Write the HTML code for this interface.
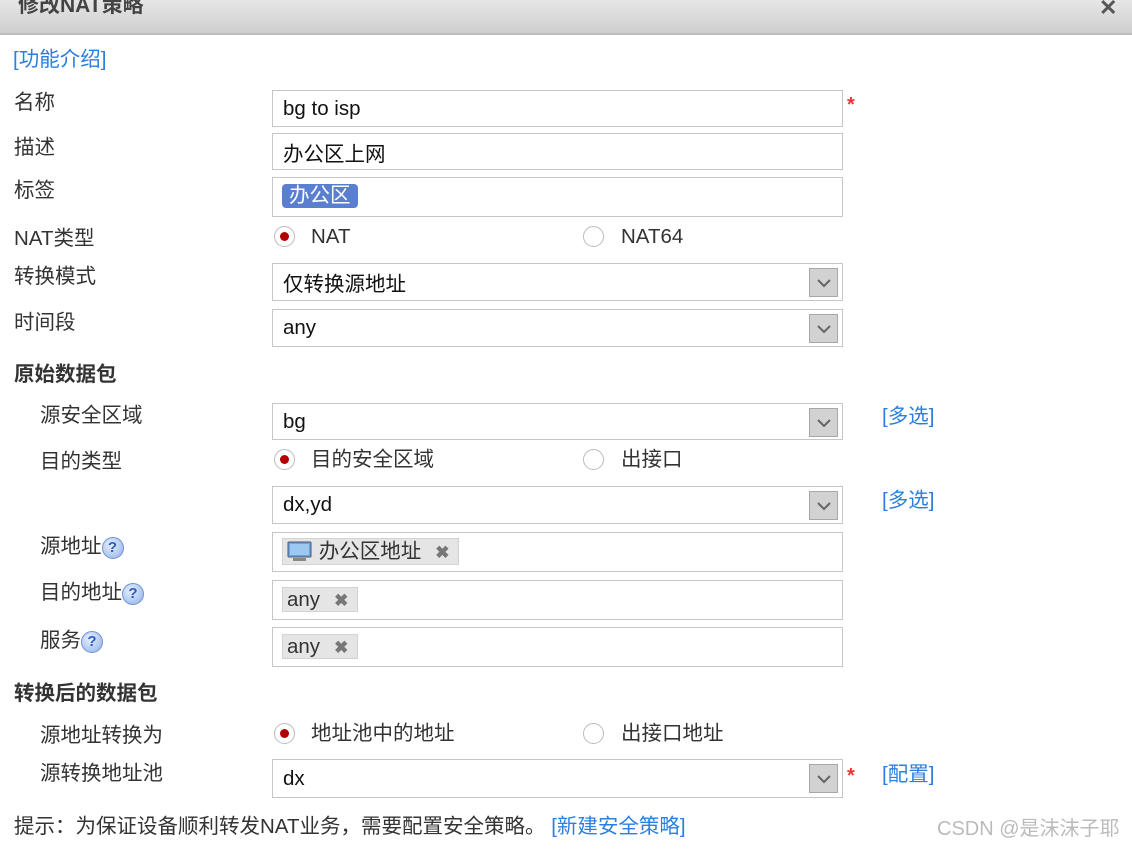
<!DOCTYPE html>
<html><head><meta charset="utf-8"><style>
body{margin:0;width:1132px;height:849px;background:#fff;overflow:hidden;position:relative;font-family:"Liberation Sans","Noto Sans CJK SC",sans-serif;font-size:20.5px;color:#333}
.a{position:absolute;white-space:nowrap;line-height:24px}
.hd{position:absolute;left:0;top:0;width:1132px;height:33px;background:linear-gradient(#e6e6e6,#cfcfcf);border-bottom:2px solid #bdbdbd}
.in{position:absolute;left:272px;width:571px;border:1px solid #c6c6c6;background:#fff;box-sizing:border-box}
.in span.t{position:absolute;left:10px;top:50%;transform:translateY(-50%);color:#111}
.dd{position:absolute;right:4px;top:4px;width:29px;height:29px;box-sizing:border-box;background:#d2d2d2;border:1px solid #a8a8a8}
.dd svg{position:absolute;left:7px;top:9px}
.lk{color:#2a7fe0}
.rd{position:absolute;width:21px;height:21px;border:1px solid #bbb;border-radius:50%;box-sizing:border-box;background:#fff}
.rd.on::after{content:"";position:absolute;left:5px;top:5px;width:9px;height:9px;border-radius:50%;background:#b00000}
.tag{position:absolute;left:9px;top:6px;height:25px;background:#e5e5e5;border:1px solid #d3d3d3;box-sizing:border-box;line-height:23px;padding:0 9px 0 4px;color:#333}
.tag b{color:#777;margin-left:14px;font-size:17px}
.q{display:inline-block;width:22px;height:22px;border-radius:50%;background:radial-gradient(circle at 40% 35%,#e8f0ff,#8fb0e6);border:1px solid #6f93d6;box-sizing:border-box;font-size:15px;font-weight:bold;color:#2c5db8;text-align:center;line-height:20px;vertical-align:middle}
.st{position:absolute;color:#e33;font-size:20px;font-weight:bold}
</style></head><body>
<div class="hd"></div>
<div class="a" style="left:18px;top:-6px;font-size:21px;font-weight:bold;color:#444">修改NAT策略</div>
<div class="a" style="left:1099px;top:-4px;font-size:22px;font-weight:bold;color:#555">✕</div>

<div class="a lk" style="left:13px;top:48px">[功能介绍]</div>

<div class="a" style="left:14px;top:91px">名称</div>
<div class="in" style="top:90px;height:37px"><span class="t">bg to isp</span></div>
<div class="st" style="left:847px;top:94px">*</div>

<div class="a" style="left:14px;top:136px">描述</div>
<div class="in" style="top:133px;height:37px"><span class="t">办公区上网</span></div>

<div class="a" style="left:14px;top:179px">标签</div>
<div class="in" style="top:177px;height:40px"><span style="position:absolute;left:9px;top:6px;height:24px;line-height:24px;padding:0 7px;background:#5b7fd0;color:#fff;border-radius:4px">办公区</span></div>

<div class="a" style="left:14px;top:227px">NAT类型</div>
<div class="rd on" style="left:274px;top:226px"></div><div class="a" style="left:311px;top:225px">NAT</div>
<div class="rd" style="left:583px;top:226px"></div><div class="a" style="left:621px;top:225px">NAT64</div>

<div class="a" style="left:14px;top:265px">转换模式</div>
<div class="in" style="top:263px;height:38px"><span class="t">仅转换源地址</span><div class="dd"><svg width="14" height="10"><path d="M1 2 L7 8 L13 2" fill="none" stroke="#666" stroke-width="2"/></svg></div></div>

<div class="a" style="left:14px;top:311px">时间段</div>
<div class="in" style="top:309px;height:38px"><span class="t">any</span><div class="dd"><svg width="14" height="10"><path d="M1 2 L7 8 L13 2" fill="none" stroke="#666" stroke-width="2"/></svg></div></div>

<div class="a" style="left:14px;top:363px;font-weight:bold">原始数据包</div>

<div class="a" style="left:40px;top:404px">源安全区域</div>
<div class="in" style="top:403px;height:37px"><span class="t">bg</span><div class="dd"><svg width="14" height="10"><path d="M1 2 L7 8 L13 2" fill="none" stroke="#666" stroke-width="2"/></svg></div></div>
<div class="a lk" style="left:882px;top:405px">[多选]</div>

<div class="a" style="left:40px;top:450px">目的类型</div>
<div class="rd on" style="left:274px;top:449px"></div><div class="a" style="left:311px;top:448px">目的安全区域</div>
<div class="rd" style="left:583px;top:449px"></div><div class="a" style="left:621px;top:448px">出接口</div>

<div class="in" style="top:486px;height:38px"><span class="t">dx,yd</span><div class="dd"><svg width="14" height="10"><path d="M1 2 L7 8 L13 2" fill="none" stroke="#666" stroke-width="2"/></svg></div></div>
<div class="a lk" style="left:882px;top:489px">[多选]</div>

<div class="a" style="left:40px;top:535px">源地址<span class="q">?</span></div>
<div class="in" style="top:532px;height:40px"><div class="tag" style="top:5px;height:27px;line-height:25px"><svg width="26" height="20" style="vertical-align:-3px"><rect x="1" y="1" width="23" height="15" rx="1" fill="#6aa3e0" stroke="#556" stroke-width="1"/><rect x="3" y="3" width="19" height="11" fill="#9cc8f2"/><rect x="6" y="17" width="13" height="3" fill="#888"/></svg> 办公区地址<b>✖</b></div></div>

<div class="a" style="left:40px;top:581px">目的地址<span class="q">?</span></div>
<div class="in" style="top:580px;height:40px"><div class="tag">any<b>✖</b></div></div>

<div class="a" style="left:40px;top:629px">服务<span class="q">?</span></div>
<div class="in" style="top:627px;height:40px"><div class="tag">any<b>✖</b></div></div>

<div class="a" style="left:14px;top:682px;font-weight:bold">转换后的数据包</div>

<div class="a" style="left:40px;top:724px">源地址转换为</div>
<div class="rd on" style="left:274px;top:723px"></div><div class="a" style="left:311px;top:722px">地址池中的地址</div>
<div class="rd" style="left:583px;top:723px"></div><div class="a" style="left:621px;top:722px">出接口地址</div>

<div class="a" style="left:40px;top:762px">源转换地址池</div>
<div class="in" style="top:759px;height:39px"><span class="t">dx</span><div class="dd"><svg width="14" height="10"><path d="M1 2 L7 8 L13 2" fill="none" stroke="#666" stroke-width="2"/></svg></div></div>
<div class="st" style="left:847px;top:765px">*</div>
<div class="a lk" style="left:882px;top:763px">[配置]</div>

<div class="a" style="left:14px;top:815px">提示：为保证设备顺利转发NAT业务，需要配置安全策略。 <span class="lk">[新建安全策略]</span></div>
<div class="a" style="left:937px;top:817px;color:#bbb;font-size:20px">CSDN @是沫沫子耶</div>
</body></html>
